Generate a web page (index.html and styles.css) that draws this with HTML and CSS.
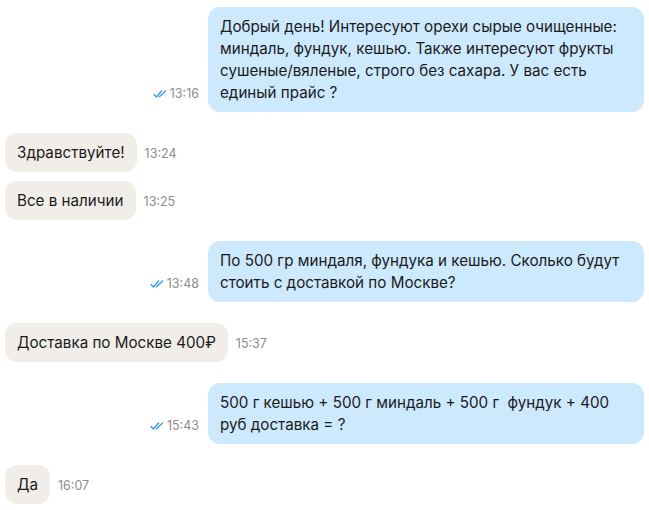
FILE: index.html
```html
<!DOCTYPE html>
<html lang="ru">
<head>
<meta charset="utf-8">
<link rel="stylesheet" href="styles.css">
</head>
<body>
<div class="chat">
  <div class="row out">
    <span class="meta"><svg class="ticks" viewBox="0 0 14 8" width="14" height="8"><path d="M1 4.6 L3.4 7 L8.6 1" /><path d="M6.4 6.8 L12.6 1" /></svg>13:16</span>
    <div class="bubble">Добрый день! Интересуют орехи сырые очищенные: миндаль, фундук, кешью. Также интересуют фрукты сушеные/вяленые, строго без сахара. У вас есть единый прайс ?</div>
  </div>
  <div class="group">
    <div class="row in">
      <div class="bubble">Здравствуйте!</div>
      <span class="meta">13:24</span>
    </div>
    <div class="row in">
      <div class="bubble">Все в наличии</div>
      <span class="meta">13:25</span>
    </div>
  </div>
  <div class="row out">
    <span class="meta"><svg class="ticks" viewBox="0 0 14 8" width="14" height="8"><path d="M1 4.6 L3.4 7 L8.6 1" /><path d="M6.4 6.8 L12.6 1" /></svg>13:48</span>
    <div class="bubble">По 500 гр миндаля, фундука и кешью. Сколько будут стоить с доставкой по Москве?</div>
  </div>
  <div class="row in">
    <div class="bubble">Доставка по Москве 400₽</div>
    <span class="meta">15:37</span>
  </div>
  <div class="row out">
    <span class="meta"><svg class="ticks" viewBox="0 0 14 8" width="14" height="8"><path d="M1 4.6 L3.4 7 L8.6 1" /><path d="M6.4 6.8 L12.6 1" /></svg>15:43</span>
    <div class="bubble">500 г кешью + 500 г миндаль + 500 г&nbsp; фундук + 400 руб доставка = ?</div>
  </div>
  <div class="row in">
    <div class="bubble">Да</div>
    <span class="meta">16:07</span>
  </div>
</div>
</body>
</html>
```
FILE: styles.css
```css
html, body {
  margin: 0;
  padding: 0;
  background: #ffffff;
}
body {
  font-family: Inter, "Noto Sans", sans-serif;
  color: #1b1b1b;
}
.chat {
  display: flex;
  flex-direction: column;
  gap: 21px;
  padding: 7px 5px 0 5px;
}
.group {
  display: flex;
  flex-direction: column;
  gap: 9px;
}
.row {
  display: flex;
  align-items: last baseline;
  gap: 8px;
}
.row.out {
  justify-content: flex-end;
  gap: 9px;
}
.bubble {
  font-size: 15.2px;
  line-height: 22px;
  padding: 9px 12px 8px;
  border-radius: 12px;
  max-width: 412px;
}
.out .bubble {
  background: #cde9fd;
}
.in .bubble {
  background: #f1eee9;
}
.meta {
  font-size: 12.5px;
  color: #8d8d8d;
  white-space: nowrap;
  display: inline-flex;
  align-items: center;
}
.ticks {
  fill: none;
  stroke: #3a9bf0;
  stroke-width: 1.4;
  stroke-linecap: round;
  stroke-linejoin: round;
  margin-right: 3px;
}
```
